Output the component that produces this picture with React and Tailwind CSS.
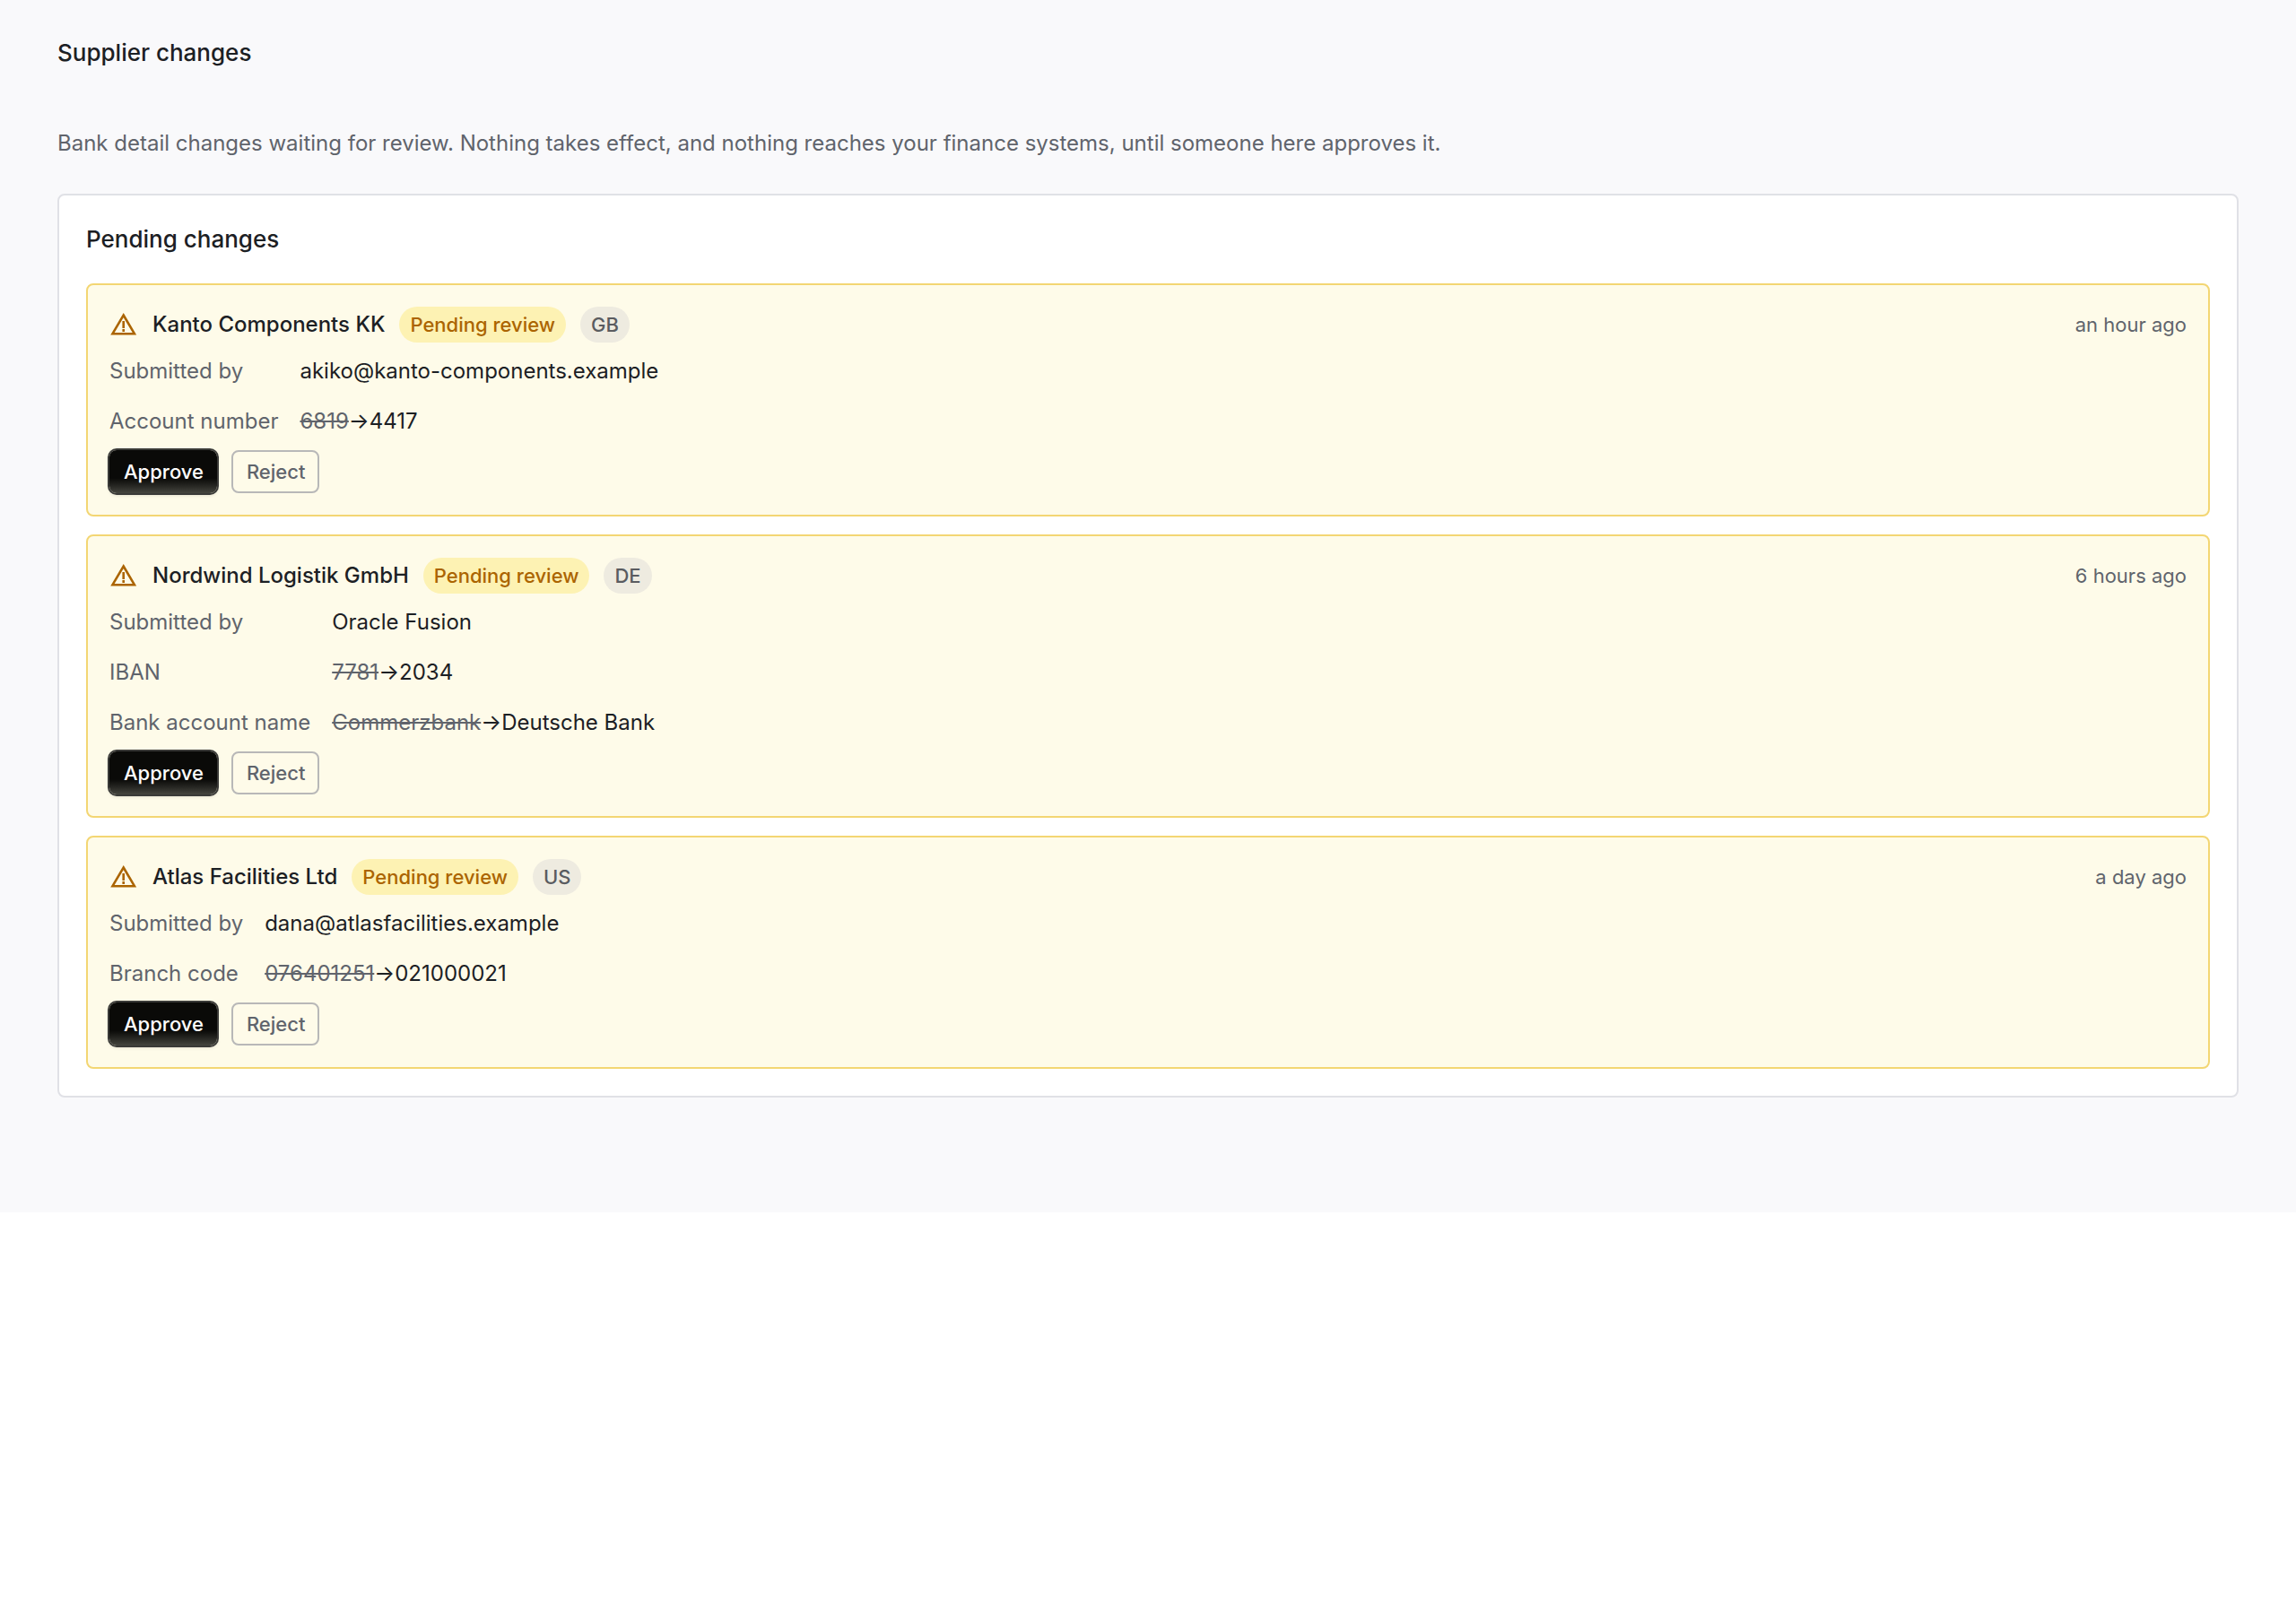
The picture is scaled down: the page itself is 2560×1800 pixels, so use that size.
import React from 'react';

const changes = [
  {
    name: 'Kanto Components KK',
    country: 'GB',
    ago: 'an hour ago',
    submittedBy: 'akiko@kanto-components.example',
    fields: [{ label: 'Account number', from: '6819', to: '4417' }],
  },
  {
    name: 'Nordwind Logistik GmbH',
    country: 'DE',
    ago: '6 hours ago',
    submittedBy: 'Oracle Fusion',
    fields: [
      { label: 'IBAN', from: '7781', to: '2034' },
      { label: 'Bank account name', from: 'Commerzbank', to: 'Deutsche Bank' },
    ],
  },
  {
    name: 'Atlas Facilities Ltd',
    country: 'US',
    ago: 'a day ago',
    submittedBy: 'dana@atlasfacilities.example',
    fields: [{ label: 'Branch code', from: '076401251', to: '021000021' }],
  },
];

const WarningIcon = () => (
  <svg viewBox="0 0 32 32" className="w-8 h-8 shrink-0 text-[#ab6400]" fill="none" stroke="currentColor" strokeWidth="2.6">
    <path d="M15.7 5.5 L27.9 26.2 H3.5 Z" />
    <path d="M15.7 12 V20" />
    <path d="M15.7 21 V24" />
  </svg>
);

const ChangeCard = ({ change }) => (
  <div className="bg-[#fefbe9] border-2 border-[#f3d673] rounded-lg p-6">
    <div className="flex items-center justify-between h-10">
      <div className="flex items-center">
        <WarningIcon />
        <span className="ml-4 text-[24px] font-medium text-[#1c2024]">{change.name}</span>
        <span className="ml-4 h-10 px-3 flex items-center rounded-full bg-[#fdf2b3] text-[#ab6400] text-[22px] font-medium">Pending review</span>
        <span className="ml-4 h-10 px-3 flex items-center rounded-full bg-[#eeebe0] text-[#5a5c60] text-[22px] font-medium">{change.country}</span>
      </div>
      <span className="text-[22px] text-[#60646c]">{change.ago}</span>
    </div>
    <div className="mt-[14px] grid grid-cols-[max-content_1fr] gap-x-6 gap-y-5 text-[24px] leading-9">
      <span className="text-[#60646c]">Submitted by</span>
      <span className="text-[#1c2024]">{change.submittedBy}</span>
      {change.fields.map((f) => (
        <React.Fragment key={f.label}>
          <span className="text-[#60646c]">{f.label}</span>
          <span className="flex items-center text-[#1c2024]">
            <s className="text-[#60646c]">{f.from}</s>
            <span>→</span>
            <span>{f.to}</span>
          </span>
        </React.Fragment>
      ))}
    </div>
    <div className="mt-[14px] flex items-center gap-4">
      <button className="h-12 pl-4 pr-[15px] rounded-lg bg-gradient-to-b from-[#0a0a08] from-65% to-[#45453f] text-white text-[22px] font-medium shadow-[0_0_0_2px_#3a3a38,0_2px_4px_rgba(0,0,0,0.15)]">Approve</button>
      <button className="h-12 pl-[15px] pr-[14px] rounded-lg border-2 border-[#b8b8b8] text-[#60646c] text-[22px] font-medium">Reject</button>
    </div>
  </div>
);

export default function App() {
  return (
    <div className="font-['Inter',sans-serif] bg-white min-h-[1800px]">
      <div className="bg-[#f9f9fb] h-[1352px] px-16 pt-[41px]">
        <h1 className="text-[26px] leading-9 font-medium text-[#1c2024]">Supplier changes</h1>
        <p className="mt-[65px] text-[24px] leading-9 text-[#60646c]">
          Bank detail changes waiting for review. Nothing takes effect, and nothing reaches your finance systems, until someone here approves it.
        </p>
        <div className="mt-[38px] bg-white border-2 border-[#e0e1e6] rounded-lg p-[30px]">
          <h2 className="mt-px text-[26px] leading-9 font-medium text-[#1c2024]">Pending changes</h2>
          <div className="mt-[31px] flex flex-col gap-5">
            {changes.map((c) => (
              <ChangeCard key={c.name} change={c} />
            ))}
          </div>
        </div>
      </div>
    </div>
  );
}
